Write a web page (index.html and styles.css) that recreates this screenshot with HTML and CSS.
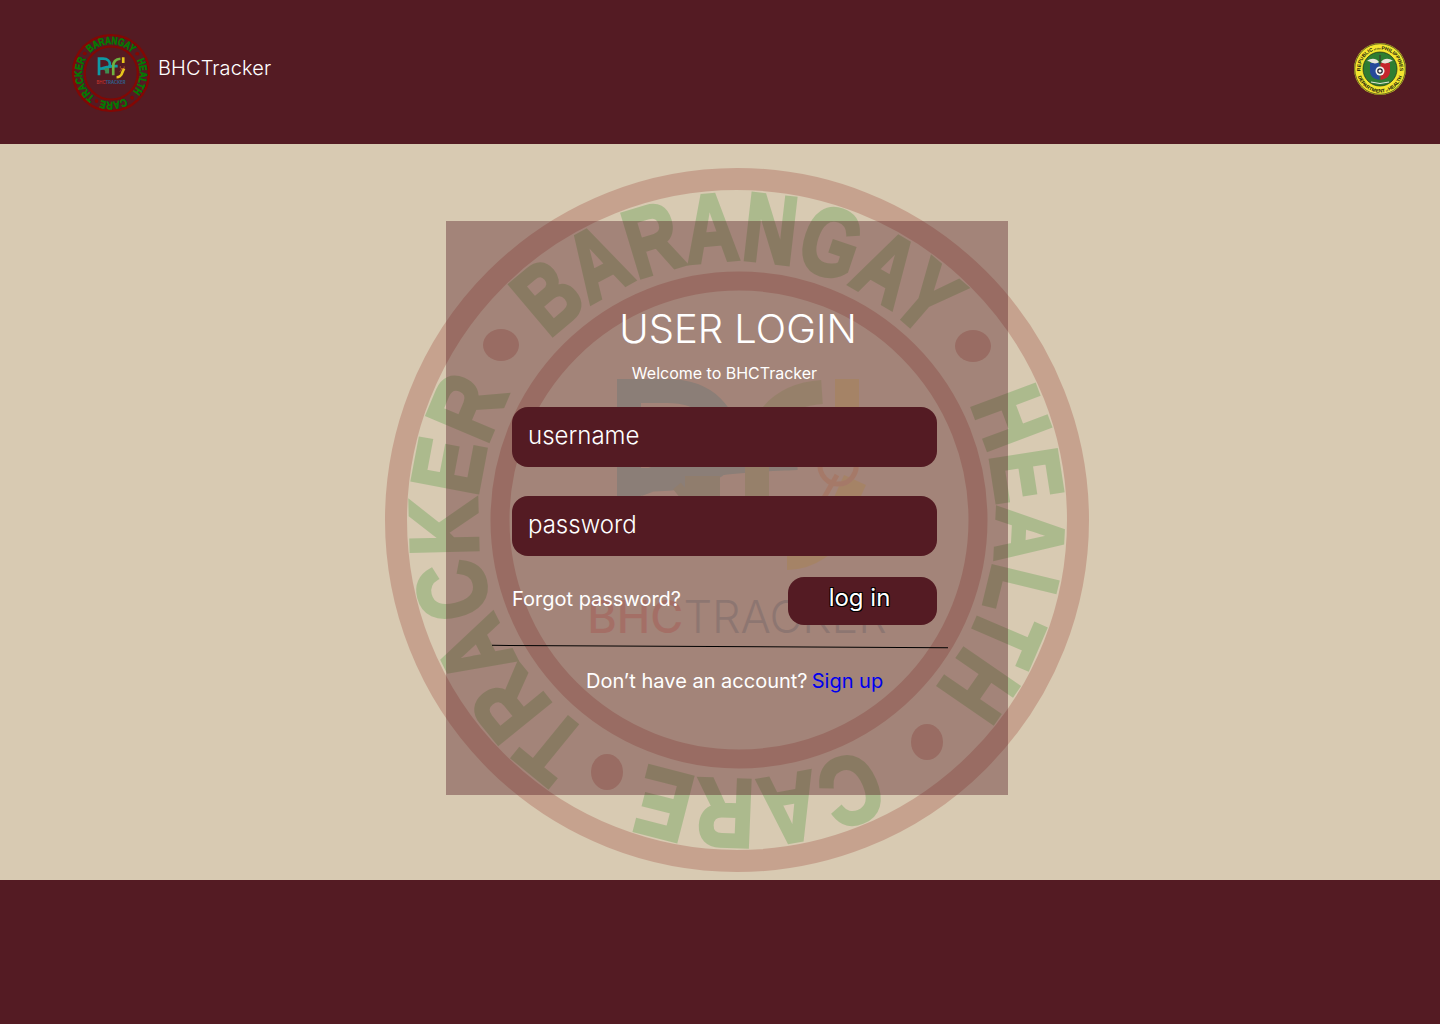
FILE: index.html
```html
<!DOCTYPE html>
<html lang="en">
<head>
<meta charset="utf-8">
<title>BHCTracker</title>
<link rel="stylesheet" href="styles.css">
</head>
<body>
<svg class="defs" width="0" height="0" aria-hidden="true">
  <defs>
    <path id="arc" d="M0 260A260 260 0 1 1 0 -260A260 260 0 1 1 0 260"/>
    <g id="seal">
      <circle class="seal-ring" r="341" stroke-width="22"/>
      <circle class="seal-ring" cx="2" r="239" stroke-width="19"/>
      <ellipse class="seal-dot" cx="-236" cy="-175" rx="18" ry="16"/>
      <ellipse class="seal-dot" cx="236" cy="-174" rx="18" ry="16"/>
      <ellipse class="seal-dot" cx="190" cy="222" rx="16" ry="18"/>
      <ellipse class="seal-dot" cx="-130" cy="252" rx="16" ry="18"/>
      <text class="seal-text"><textPath href="#arc" startOffset="50%" text-anchor="middle" textLength="418" lengthAdjust="spacingAndGlyphs">BARANGAY</textPath></text>
      <g transform="rotate(97)"><text class="seal-text"><textPath href="#arc" startOffset="50%" text-anchor="middle" textLength="305" lengthAdjust="spacingAndGlyphs">HEALTH</textPath></text></g>
      <g transform="rotate(175.500)"><text class="seal-text"><textPath href="#arc" startOffset="50%" text-anchor="middle" textLength="225" lengthAdjust="spacingAndGlyphs">CARE</textPath></text></g>
      <g transform="rotate(256.500)"><text class="seal-text"><textPath href="#arc" startOffset="50%" text-anchor="middle" textLength="386" lengthAdjust="spacingAndGlyphs">TRACKER</textPath></text></g>
    </g>
    <g id="mark">
      <path class="mark-b" d="M-108 -141V20M-108 -129H-70C-30 -129 -10 -105 -10 -75C-10 -50 -40 -40 -100 -40M-100 -35C-40 -60 20 -60 60 -62"/>
      <path class="mark-k" d="M-47 -39H-22V0H-47zM-60 -34L-47 -18"/>
      <path class="mark-c" d="M85 -128C40 -125 20 -95 20 -60V20"/>
      <path class="mark-i" d="M110 -141V-90M118 -40L100 0C95 25 70 38 50 38"/>
      <path class="mark-r" d="M85 -62A18 18 0 1 0 118 -60M80 -10L100 -45"/>
    </g>
  </defs>
</svg>

<header class="topbar">
  <div class="brand">
    <svg class="brand-logo" viewBox="-360 -360 720 720" role="img" aria-label="Barangay Health Care Tracker seal">
      <use href="#seal"/>
      <use href="#mark"/>
      <text class="mark-word" y="100" text-anchor="middle"><tspan class="mark-word-red">BHC</tspan>TRACKER</text>
    </svg>
    <span class="brand-name">BHCTracker</span>
  </div>
  <svg class="doh-logo" viewBox="0 0 52 52" role="img" aria-label="Department of Health seal">
    <circle cx="26" cy="26" r="26" fill="#f3e52f"/>
    <circle cx="26" cy="26" r="25.300" fill="none" stroke="#23301a" stroke-width=".7"/>
    <circle cx="26" cy="26" r="17" fill="#2f7d32" stroke="#1d2b18" stroke-width=".7"/>
    <path fill="#264a9a" d="M16 20h9.500v17c-5-1-9.500-3-9.500-9z"/>
    <path fill="#c5262c" d="M26.500 20h9.500v8c0 6-4.500 8-9.500 9z"/>
    <circle cx="26" cy="28" r="4.500" fill="#f4f4f0"/>
    <circle cx="26" cy="28" r="2.200" fill="none" stroke="#1a1a2a" stroke-width="1.200"/>
    <path fill="#e8e4da" d="M25 19c-3-4-8-4-12-1 3 0 4 2 6 2 2 1 5 0 6-1zM27 19c3-4 8-4 12-1-3 0-4 2-6 2-2 1-5 0-6-1z"/>
    <rect x="25.400" y="12" width="1.200" height="9" fill="#3a3a2a"/>
    <path fill="none" stroke="#e8e4da" d="M17 39q9 3 18 0"/>
    <path id="dohTop" fill="none" d="M6.800 30a19.600 19.600 0 1 1 38.400 0"/>
    <path id="dohBot" fill="none" d="M3 30a23.300 23.300 0 0 0 46 0"/>
    <text class="doh-text"><textPath href="#dohTop" startOffset="50%" text-anchor="middle">REPUBLIC<tspan class="doh-tiny"> of the </tspan>PHILIPPINES</textPath></text>
    <text class="doh-text"><textPath href="#dohBot" startOffset="50%" text-anchor="middle">DEPARTMENT<tspan class="doh-tiny"> of </tspan>HEALTH</textPath></text>
  </svg>
</header>

<main class="stage">
  <svg class="watermark" viewBox="-360 -360 720 720" aria-hidden="true">
    <use href="#seal"/>
    <use href="#mark"/>
    <text class="mark-word" y="113" text-anchor="middle"><tspan class="mark-word-red">BHC</tspan>TRACKER</text>
  </svg>
  <section class="card">
    <h1 class="card-title">USER LOGIN</h1>
    <p class="card-sub">Welcome to BHCTracker</p>
    <div class="field">username</div>
    <div class="field">password</div>
    <div class="actions">
      <a class="forgot">Forgot password?</a>
      <button class="login" type="button">log in</button>
    </div>
    <div class="rule"></div>
    <p class="signup">Don’t have an account? <a class="signup-link">Sign up</a></p>
  </section>
</main>

<footer class="bottombar"></footer>
</body>
</html>
```
FILE: styles.css
```css
* { box-sizing: border-box; }
html, body { margin: 0; height: 100%; }
body {
  display: flex;
  flex-direction: column;
  height: 1024px;
  overflow: hidden;
  font-family: Inter, "Liberation Sans", sans-serif;
  color: #fff;
  background: #d8cab2;
}
.defs { position: absolute; }

.topbar {
  flex: 0 0 144px;
  display: flex;
  justify-content: space-between;
  align-items: flex-start;
  padding: 33px 34px 0 71px;
  background: #541b23;
}
.brand { display: flex; align-items: flex-start; gap: 7px; }
.brand-logo { width: 80px; height: 80px; }
.brand-name { margin-top: 22px; font-size: 20px; line-height: 26px; font-weight: 300; letter-spacing: .1px; color: #fff; }
.doh-logo { width: 52px; height: 52px; margin-top: 10px; }
.doh-text { font: 700 5px "Liberation Sans", sans-serif; fill: #14190c; }
.doh-tiny { font-size: 2.500px; }

.brand-logo .seal-ring { stroke: #700d0f; }
.brand-logo .seal-dot { fill: #700d0f; }
.brand-logo .seal-text { fill: #0b8a12; stroke: #0b8a12; }
.brand-logo .mark-word { font-size: 38px; font-weight: 700; fill: #2f5f8a; }
.brand-logo .mark-word-red { fill: #c9352c; }

.stage {
  position: relative;
  flex: 0 0 736px;
  display: flex;
  justify-content: center;
  padding: 77px 0 0 14px;
}
.watermark {
  position: absolute;
  left: 377px;
  top: 16px;
  width: 720px;
  height: 720px;
  opacity: .2;
}
.seal-ring { fill: none; stroke: #830703; }
.seal-dot { fill: #830703; }
.seal-text {
  font: 700 96px "Liberation Sans", sans-serif;
  fill: #007f00;
  stroke: #007f00;
  stroke-width: 4px;
}
.mark-b, .mark-c, .mark-i, .mark-r, .mark-k { fill: none; stroke-width: 24; }
.mark-b { stroke: #0f9aa5; }
.mark-c { stroke: #6fb040; }
.mark-i { stroke: #e8c51c; }
.mark-k { stroke: #3f8f50; stroke-width: 10; fill: #3f8f50; }
.mark-r { stroke: #e8742e; stroke-width: 5; }
.mark-word { font: 300 45px Inter, sans-serif; fill: #1d5a7a; }
.mark-word-red { font-weight: 500; fill: #e0201c; }

.card {
  position: relative;
  width: 562px;
  height: 574px;
  padding: 84px 71px 0 66px;
  background: rgba(84, 27, 35, .4);
}
.card-title {
  margin: 0;
  text-align: center;
  font-size: 40px;
  font-weight: 300;
  line-height: 48px;
  padding-left: 27px;
}
.card-sub {
  margin: 10px 0 0;
  text-align: center;
  font-size: 16px;
  line-height: 20px;
}
.field {
  height: 60px;
  margin-top: 24px;
  padding: 13px 16px 0;
  border-radius: 16px;
  background: #541b23;
  font-size: 24px;
  line-height: 32px;
  font-weight: 300;
}
.field + .field { margin-top: 29px; }
.actions {
  display: flex;
  align-items: center;
  justify-content: space-between;
  margin-top: 21px;
}
.forgot { margin-top: -4px; font-size: 20px; line-height: 24px; }
.login {
  width: 149px;
  height: 48px;
  padding: 0 6px 6px 0;
  border: 0;
  border-radius: 16px;
  background: #541b23;
  color: #fff;
  font: 400 24px/32px Inter, sans-serif;
  text-shadow: 1px 1px 0 #000, -1px 1px 0 #000, 1px -1px 0 #000, -1px -1px 0 #000;
}
.rule {
  width: 456px;
  height: 2px;
  margin: 21px 0 0 -20px;
  background: linear-gradient(#000, #000) 0 0 / 100% 1px no-repeat;
  transform: rotate(.3deg);
}
.signup {
  margin: 19px 0 0 8px;
  padding-left: 66px;
  font-size: 20px;
  line-height: 28px;
  white-space: nowrap;
}
.signup-link { margin-left: -1.500px; color: #0000ee; }

.bottombar { flex: 0 0 144px; background: #541b23; }
```
